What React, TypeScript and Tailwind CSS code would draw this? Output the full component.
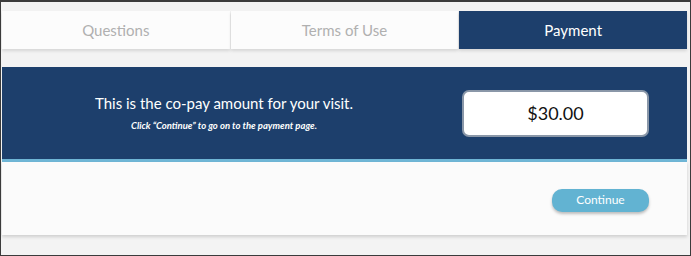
import React from 'react';

const tabs = [
  { label: 'Questions', active: false },
  { label: 'Terms of Use', active: false },
  { label: 'Payment', active: true },
];

export default function App() {
  return (
    <div
      className="w-[691px] h-[256px] border border-[#3b3b3b] border-t-2 bg-[#f3f3f3] overflow-hidden"
      style={{ fontFamily: 'Lato, "Open Sans", sans-serif' }}
    >
      <div className="pl-px pr-[3px] pt-[9px]">
        {/* TABS */}
        <div className="flex gap-px h-[38px]">
          {tabs.map((t) => (
            <div
              key={t.label}
              className={`flex-1 flex items-center justify-center text-[15px] shadow-[0_2px_3px_rgba(0,0,0,0.12)] ${
                t.active ? 'bg-[#1d3f6c] text-white' : 'bg-[#fcfcfc] text-[#b0b0b0]'
              }`}
            >
              {t.label}
            </div>
          ))}
        </div>

        {/* PAYMENT PANEL */}
        <div className="mt-[18px] bg-[#1d3f6c] border-b-[3px] border-[#6fb6d6] h-[95px] flex items-center">
          <div className="flex-1 flex flex-col items-center text-white">
            <p className="text-[15px] leading-5">This is the co-pay amount for your visit.</p>
            <p className="text-[9.5px] font-bold italic mt-[6px]">
              Click “Continue” to go on to the payment page.
            </p>
          </div>
          <div className="w-[187px] h-[47px] mr-[38px] ml-4 bg-white rounded-[7px] border-2 border-[#8a97a8] flex items-center justify-center text-[18px] text-[#111]">
            $30.00
          </div>
        </div>

        {/* FOOTER */}
        <div className="bg-[#fbfbfb] h-[73px] flex items-center justify-end pr-[38px] shadow-[0_2px_3px_rgba(0,0,0,0.15)]">
          <button className="w-[97px] h-[23px] rounded-[10px] bg-[#62b3d2] text-white text-[12px] shadow-[0_2px_3px_rgba(0,0,0,0.25)] mt-[3px]">
            Continue
          </button>
        </div>
      </div>
    </div>
  );
}
